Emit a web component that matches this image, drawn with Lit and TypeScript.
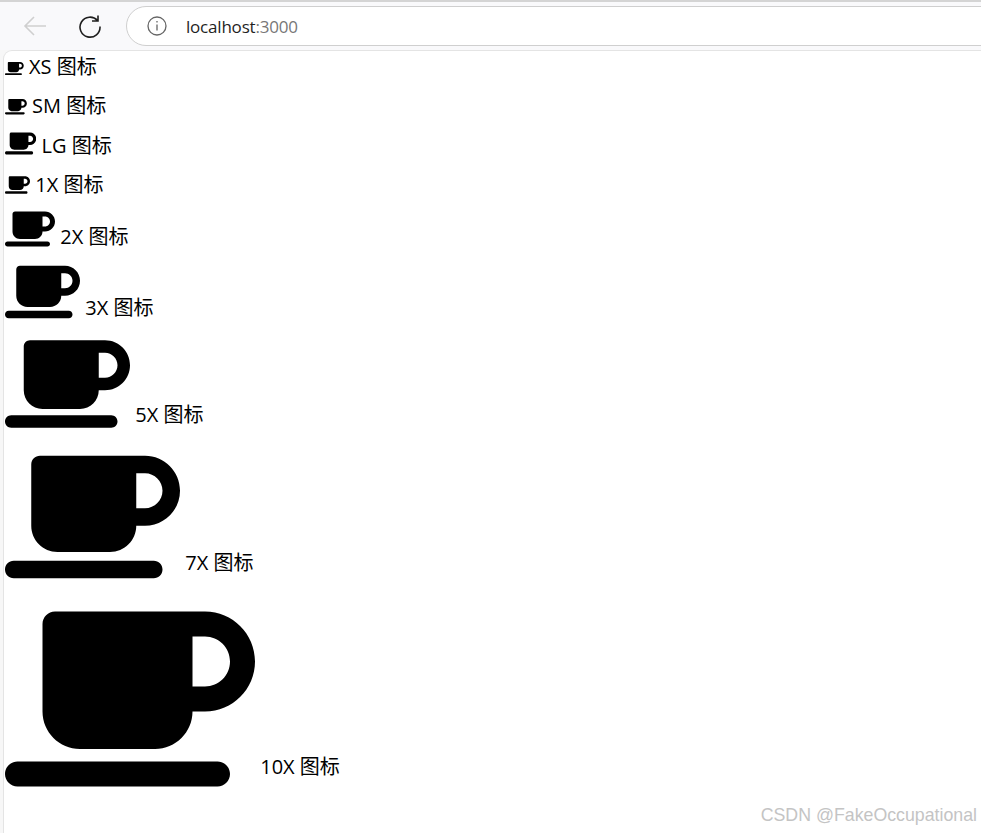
import { LitElement, html, css, svg } from 'lit';
import { customElement } from 'lit/decorators.js';

const MUG = 'M96 64c0-17.7 14.3-32 32-32H448h64c70.7 0 128 57.3 128 128s-57.3 128-128 128H480c0 53-43 96-96 96H192c-53 0-96-43-96-96V64zM480 224h32c35.3 0 64-28.7 64-64s-28.7-64-64-64H480V224zM32 416H544c17.7 0 32 14.3 32 32s-14.3 32-32 32H32c-17.7 0-32-14.3-32-32s14.3-32 32-32z';

const ROWS = [
  { size: 'xs', label: 'XS 图标' },
  { size: 'sm', label: 'SM 图标' },
  { size: 'lg', label: 'LG 图标' },
  { size: 'x1', label: '1X 图标' },
  { size: 'x2', label: '2X 图标' },
  { size: 'x3', label: '3X 图标' },
  { size: 'x5', label: '5X 图标' },
  { size: 'x7', label: '7X 图标' },
  { size: 'x10', label: '10X 图标' },
];

@customElement('app-root')
export class AppRoot extends LitElement {
  static styles = css`
    :host {
      display: block;
      position: relative;
      height: 833px;
      overflow: hidden;
      background: #f7f7f7;
      font-family: 'Open Sans', 'Noto Sans CJK SC', sans-serif;
    }
    .toolbar {
      display: flex;
      align-items: center;
      height: 50px;
      box-sizing: border-box;
      padding-left: 23px;
      border-top: 2px solid #d4d4d4;
      background: #f9f9fb;
    }
    .tool {
      display: block;
      flex: none;
    }
    .back {
      margin-right: 31px;
    }
    .reload {
      margin-right: 24px;
    }
    .address {
      flex: none;
      display: flex;
      align-items: center;
      box-sizing: border-box;
      width: 900px;
      height: 40px;
      padding-left: 20px;
      border: 1px solid #cfcfcf;
      border-radius: 20px;
      background: #fff;
      font-size: 17px;
      letter-spacing: -0.2px;
      color: #1f1f1f;
    }
    .info {
      display: block;
      margin-right: 19px;
    }
    .port {
      color: #777;
    }
    .page {
      box-sizing: border-box;
      height: 783px;
      margin: 1px 0 0 4px;
      padding: 2px 0 0 1px;
      border-top-left-radius: 8px;
      box-shadow: 0 0 0 1px #e4e4e4;
      background: #fff;
      color: #000;
      font-size: 20px;
    }
    .row {
      margin-bottom: 11.6px;
      white-space: nowrap;
      line-height: 27.6px;
    }
    .row-x1 {
      margin-bottom: 10px;
    }
    .row-x3 {
      margin-bottom: 11.6px;
    }
    .row-x5 {
      margin-bottom: 13px;
    }
    .row-x7 {
      margin-bottom: 12.6px;
    }
    .icon {
      display: inline-block;
      height: 1em;
      width: 1.25em;
      vertical-align: -0.125em;
      fill: currentColor;
    }
    .xs { font-size: 15px; }
    .sm { font-size: 17.5px; }
    .lg { font-size: 25px; }
    .x1 { font-size: 20px; }
    .x2 { font-size: 40px; }
    .x3 { font-size: 60px; }
    .x5 { font-size: 100px; }
    .x7 { font-size: 140px; }
    .x10 { font-size: 200px; }
    .watermark {
      position: absolute;
      right: 4px;
      bottom: 7px;
      font-family: 'Liberation Sans', sans-serif;
      font-size: 17.75px;
      color: #c4c4c4;
    }
  `;

  render() {
    return html`
      <div class="toolbar">
        <svg class="tool back" width="24" height="24" viewBox="0 0 24 24" fill="none" stroke="#cfcfcf" stroke-width="1.6">
          <path d="M23 12H2M11 3l-9 9 9 9" />
        </svg>
        <svg class="tool reload" width="24" height="24" viewBox="0 0 24 24" fill="none" stroke="#1f1f1f" stroke-width="1.6">
          <path d="M19.5 6.5A10 10 0 1 0 22 12.5M20 1.5v5.5h-6" />
        </svg>
        <div class="address">
          <svg class="info" width="20" height="20" viewBox="0 0 20 20" fill="none" stroke="#666" stroke-width="1.3">
            <circle cx="10" cy="10" r="9" />
            <path d="M10 8.5v6M10 5v1.6" />
          </svg>
          <span>localhost<span class="port">:3000</span></span>
        </div>
      </div>
      <div class="page">
        ${ROWS.map(
          (row) => html`
            <div class="row row-${row.size}">
              <svg class="icon ${row.size}" viewBox="0 0 640 512">${svg`<path d=${MUG} />`}</svg>
              ${row.label}
            </div>
          `
        )}
      </div>
      <div class="watermark">CSDN @FakeOccupational</div>
    `;
  }
}
